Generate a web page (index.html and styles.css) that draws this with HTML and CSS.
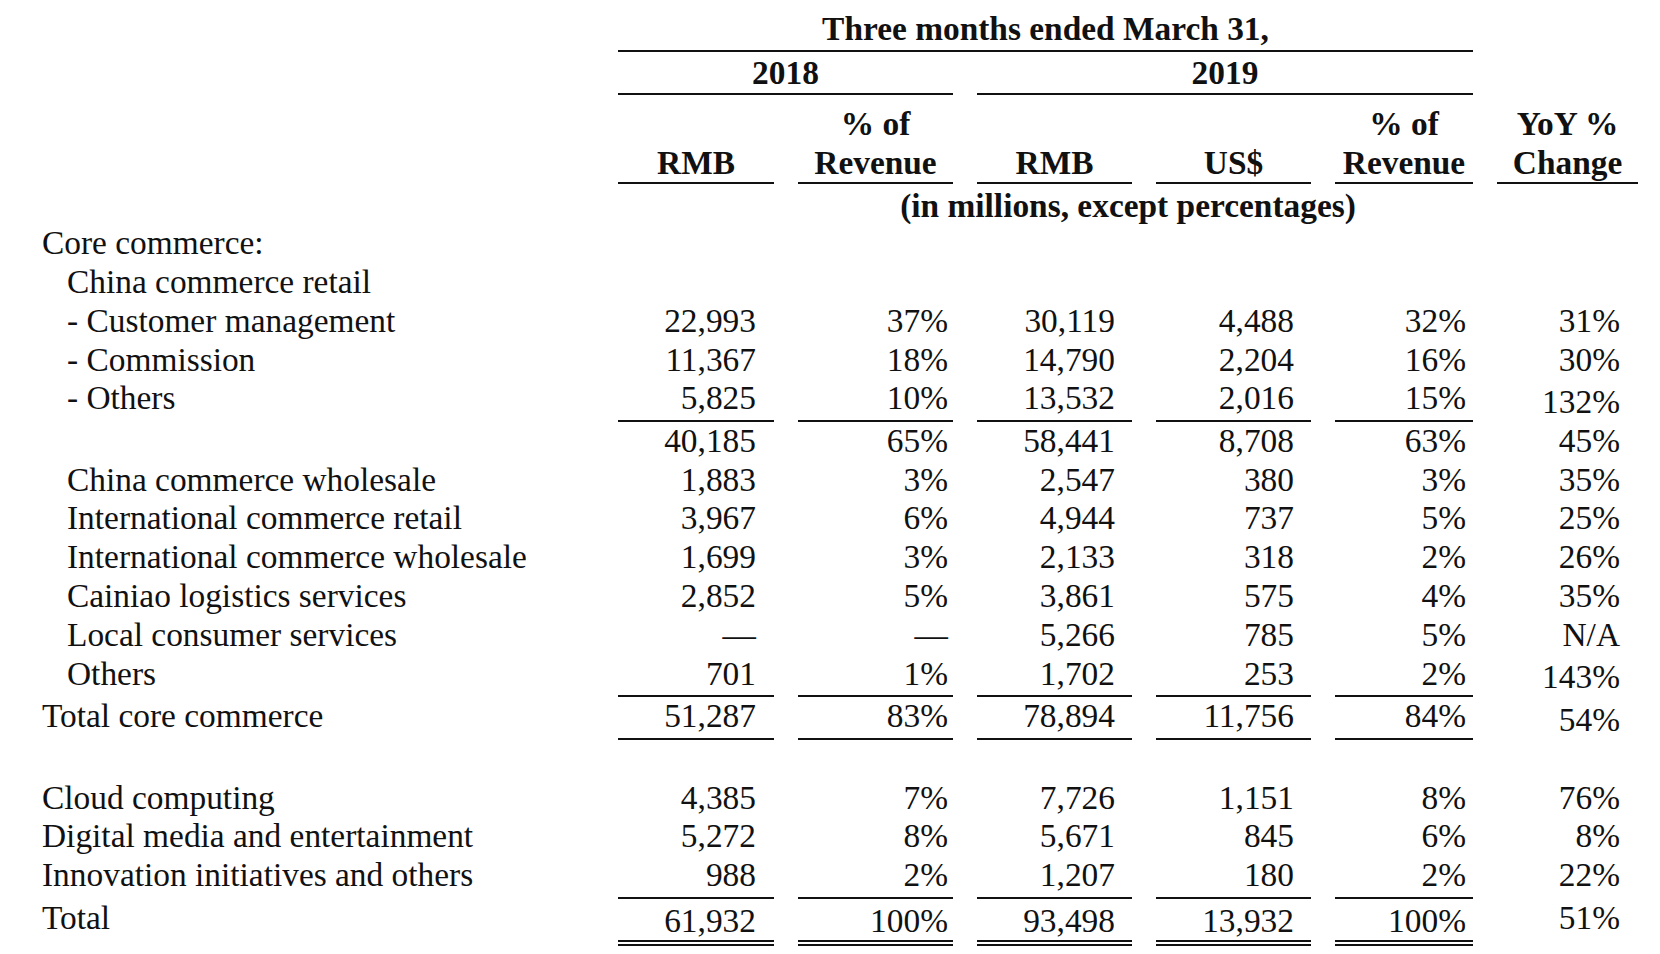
FILE: index.html
```html
<!DOCTYPE html>
<html lang="en">
<head>
<meta charset="utf-8">
<title>Revenue by segment</title>
<link rel="stylesheet" href="styles.css">
</head>
<body>
<div class="table">
  <div class="row head1">
    <div class="span-title ruled">Three months ended March 31,</div>
  </div>
  <div class="row head2">
    <div class="span-2018 ruled">2018</div>
    <div class="span-2019 ruled">2019</div>
  </div>
  <div class="row head3">
    <div class="blank"></div>
    <div class="ch ruled">RMB</div>
    <div class="ch ruled">% of<br>Revenue</div>
    <div class="ch ruled">RMB</div>
    <div class="ch ruled">US$</div>
    <div class="ch ruled">% of<br>Revenue</div>
    <div class="ch ruled">YoY %<br>Change</div>
  </div>
  <div class="row head4">
    <div class="span-units">(in millions, except percentages)</div>
  </div>

  <div class="row body">
    <div class="lbl">Core commerce:</div>
  </div>
  <div class="row body">
    <div class="lbl ind">China commerce retail</div>
  </div>
  <div class="row body">
    <div class="lbl ind">- Customer management</div>
    <div class="n">22,993</div><div class="n">37%</div><div class="n">30,119</div><div class="n">4,488</div><div class="n">32%</div><div class="n yoy">31%</div>
  </div>
  <div class="row body">
    <div class="lbl ind">- Commission</div>
    <div class="n">11,367</div><div class="n">18%</div><div class="n">14,790</div><div class="n">2,204</div><div class="n">16%</div><div class="n yoy">30%</div>
  </div>
  <div class="row body rule">
    <div class="lbl ind">- Others</div>
    <div class="n">5,825</div><div class="n">10%</div><div class="n">13,532</div><div class="n">2,016</div><div class="n">15%</div><div class="n yoy low">132%</div>
  </div>
  <div class="row body">
    <div class="lbl"></div>
    <div class="n">40,185</div><div class="n">65%</div><div class="n">58,441</div><div class="n">8,708</div><div class="n">63%</div><div class="n yoy">45%</div>
  </div>
  <div class="row body">
    <div class="lbl ind">China commerce wholesale</div>
    <div class="n">1,883</div><div class="n">3%</div><div class="n">2,547</div><div class="n">380</div><div class="n">3%</div><div class="n yoy">35%</div>
  </div>
  <div class="row body">
    <div class="lbl ind">International commerce retail</div>
    <div class="n">3,967</div><div class="n">6%</div><div class="n">4,944</div><div class="n">737</div><div class="n">5%</div><div class="n yoy">25%</div>
  </div>
  <div class="row body">
    <div class="lbl ind">International commerce wholesale</div>
    <div class="n">1,699</div><div class="n">3%</div><div class="n">2,133</div><div class="n">318</div><div class="n">2%</div><div class="n yoy">26%</div>
  </div>
  <div class="row body">
    <div class="lbl ind">Cainiao logistics services</div>
    <div class="n">2,852</div><div class="n">5%</div><div class="n">3,861</div><div class="n">575</div><div class="n">4%</div><div class="n yoy">35%</div>
  </div>
  <div class="row body">
    <div class="lbl ind">Local consumer services</div>
    <div class="n">—</div><div class="n">—</div><div class="n">5,266</div><div class="n">785</div><div class="n">5%</div><div class="n yoy">N/A</div>
  </div>
  <div class="row body rule">
    <div class="lbl ind">Others</div>
    <div class="n">701</div><div class="n">1%</div><div class="n">1,702</div><div class="n">253</div><div class="n">2%</div><div class="n yoy low">143%</div>
  </div>
  <div class="row body rule total-core">
    <div class="lbl">Total core commerce</div>
    <div class="n">51,287</div><div class="n">83%</div><div class="n">78,894</div><div class="n">11,756</div><div class="n">84%</div><div class="n yoy low">54%</div>
  </div>
  <div class="spacer"></div>
  <div class="row body">
    <div class="lbl">Cloud computing</div>
    <div class="n">4,385</div><div class="n">7%</div><div class="n">7,726</div><div class="n">1,151</div><div class="n">8%</div><div class="n yoy">76%</div>
  </div>
  <div class="row body">
    <div class="lbl">Digital media and entertainment</div>
    <div class="n">5,272</div><div class="n">8%</div><div class="n">5,671</div><div class="n">845</div><div class="n">6%</div><div class="n yoy">8%</div>
  </div>
  <div class="row body rule">
    <div class="lbl">Innovation initiatives and others</div>
    <div class="n">988</div><div class="n">2%</div><div class="n">1,207</div><div class="n">180</div><div class="n">2%</div><div class="n yoy">22%</div>
  </div>
  <div class="row body grand">
    <div class="lbl">Total</div>
    <div class="n">61,932</div><div class="n">100%</div><div class="n">93,498</div><div class="n">13,932</div><div class="n">100%</div><div class="n yoy">51%</div>
  </div>
</div>
</body>
</html>
```

FILE: styles.css
```css
html, body {
  margin: 0;
  padding: 0;
  background: #ffffff;
}

body {
  font-family: "Liberation Serif", "Times New Roman", serif;
  font-size: 33.4px;
  color: #111111;
}

.table {
  display: flex;
  flex-direction: column;
  width: 1660px;
}

.row {
  display: grid;
  grid-template-columns: 594px 156px 155px 155px 155px 138px 141px;
  column-gap: 24px;
}

/* ---------- header ---------- */
.head1, .head2, .head3, .head4 {
  font-weight: bold;
  text-align: center;
}

.ruled {
  border-bottom: 2px solid #111111;
}

.head1 {
  padding-top: 10px;
}
.head1 .span-title {
  grid-column: 2 / 7;
  line-height: 38.6px;
  padding-bottom: 1px;
}

.head2 {
  padding-top: 2px;
}
.head2 > div {
  line-height: 38.6px;
  padding-bottom: 1px;
}
.head2 .span-2018 {
  grid-column: 2 / 4;
}
.head2 .span-2019 {
  grid-column: 4 / 7;
}

.head3 {
  padding-top: 8.9px;
  align-items: end;
}
.head3 .ch {
  line-height: 39.1px;
}

.head4 {
  padding-top: 3px;
}
.head4 .span-units {
  grid-column: 2 / 8;
  line-height: 37px;
}

/* ---------- body ---------- */
.body {
  line-height: 38.8px;
}

.lbl {
  grid-column: 1;
  padding-left: 42px;
  white-space: nowrap;
}
.lbl.ind {
  padding-left: 67px;
}

.n {
  text-align: right;
  white-space: nowrap;
}
.row > .n:nth-child(2) { padding-right: 18px; }
.row > .n:nth-child(3) { padding-right: 5px; }
.row > .n:nth-child(4) { padding-right: 17px; }
.row > .n:nth-child(5) { padding-right: 17px; }
.row > .n:nth-child(6) { padding-right: 7px; }
.row > .n:nth-child(7) { padding-right: 18px; }

.rule > .n:not(.yoy) {
  padding-bottom: 1.5px;
  border-bottom: 2px solid #111111;
}
.rule > .yoy.low {
  padding-top: 3.5px;
}

.total-core > .n:not(.yoy) {
  padding-bottom: 2px;
}
.total-core > .yoy.low {
  padding-top: 4px;
}

.spacer {
  height: 39px;
}

.grand > .n:not(.yoy) {
  padding-top: 3px;
  line-height: 38px;
  border-bottom: 6px double #111111;
}
```
